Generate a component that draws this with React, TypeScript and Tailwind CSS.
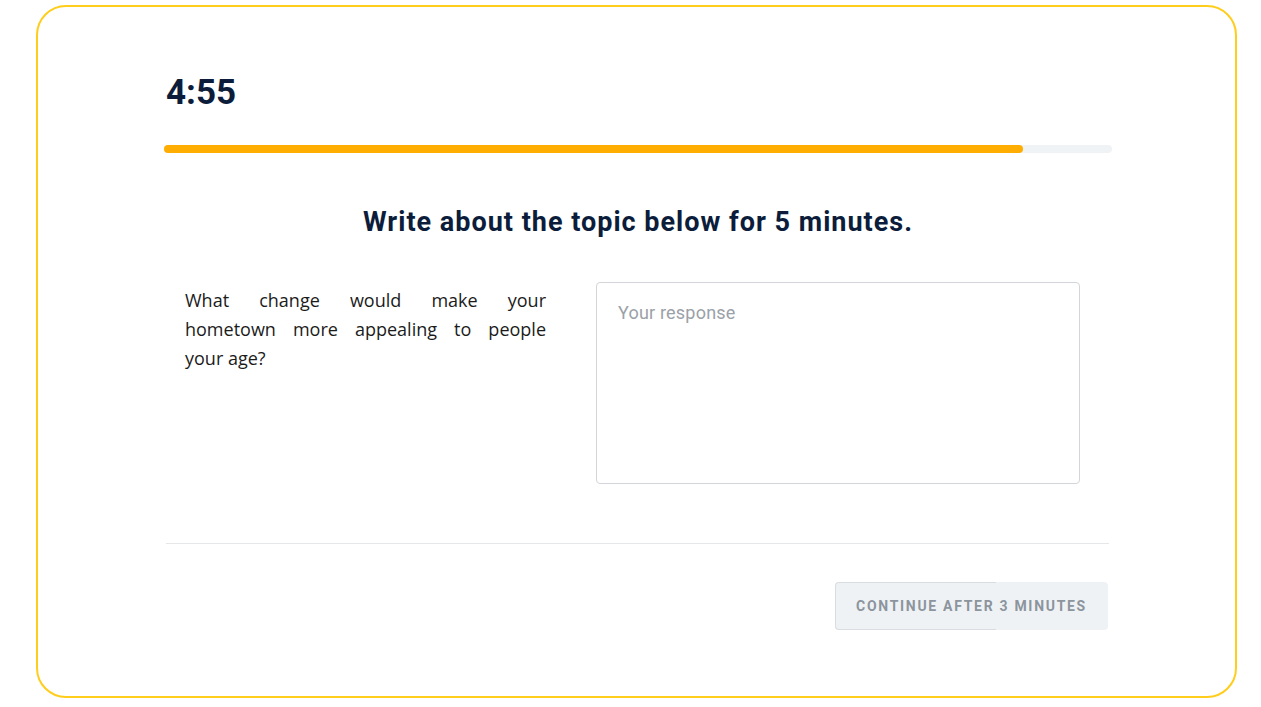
import React from "react";

// timer + prompt card
const App: React.FC = () => {
  const progress = 90.6; // percent of bar filled

  return (
    <div className="w-[1261px] h-[707px] bg-white pt-[5px] pl-[36px]">
      <div className="w-[1201px] h-[693px] border-2 border-[#ffcd1c] rounded-[30px] bg-white">
        <div className="ml-[126px] w-[948px] pt-[64px]" style={{ fontFamily: "Roboto, 'Noto Sans', sans-serif" }}>
          {/* timer */}
          <div className="text-[35px] leading-[44px] font-bold text-[#0b1d3a] pl-[2px]">4:55</div>

          {/* progress */}
          <div className="mt-[30px] h-[8px] w-full rounded-full bg-[#f0f3f6]">
            <div className="h-full rounded-full bg-[#ffad00]" style={{ width: `${progress}%` }} />
          </div>

          {/* heading */}
          <h1 className="mt-[52px] text-center text-[27px] leading-[34px] font-bold text-[#0b1d3a] tracking-[1px]">
            Write about the topic below for 5 minutes.
          </h1>

          {/* question + answer */}
          <div className="mt-[43px] flex">
            <p
              className="ml-[21px] mt-[4px] w-[361px] text-[18px] leading-[29px] text-[#1b1b1b]"
              style={{ fontFamily: "'Open Sans', Lato, sans-serif" }}
            >
              <span className="block text-justify [text-align-last:justify]">What change would make your</span>
              <span className="block text-justify [text-align-last:justify]">hometown more appealing to people</span>
              <span className="block">your age?</span>
            </p>
            <textarea
              placeholder="Your response"
              className="ml-[50px] w-[484px] h-[202px] resize-none rounded-[4px] border border-[#d2d5d9] px-[21px] py-[18px] text-[18px] leading-[24px] tracking-[0.2px] text-[#333] placeholder:text-[#9ba1a8] outline-none"
              style={{ fontFamily: "Roboto, 'Noto Sans', sans-serif" }}
            />
          </div>

          {/* footer */}
          <div className="mt-[59px] ml-[2px] w-[943px] h-px bg-[#e6e7e9]" />
          <div className="mt-[38px] flex justify-end pr-[4px]">
            <button className="relative h-[48px] w-[273px] rounded-[4px] bg-[#eff2f5] text-[14px] font-bold tracking-[1.7px] text-[#8c949d]">
              <span className="absolute inset-y-0 left-0 w-[161px] rounded-l-[4px] border border-r-0 border-[#d9dde2]" />
              <span className="relative">CONTINUE AFTER 3 MINUTES</span>
            </button>
          </div>
        </div>
      </div>
    </div>
  );
};

export default App;
